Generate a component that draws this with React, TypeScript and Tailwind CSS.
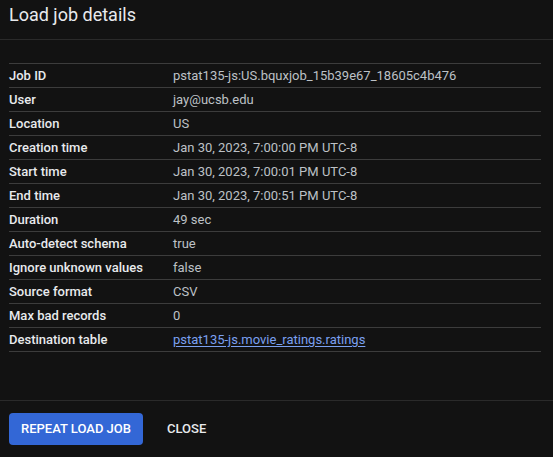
import React from 'react';

const rows: { label: string; value: string; link?: boolean }[] = [
  { label: 'Job ID', value: 'pstat135-js:US.bquxjob_15b39e67_18605c4b476' },
  { label: 'User', value: 'jay@ucsb.edu' },
  { label: 'Location', value: 'US' },
  { label: 'Creation time', value: 'Jan 30, 2023, 7:00:00 PM UTC-8' },
  { label: 'Start time', value: 'Jan 30, 2023, 7:00:01 PM UTC-8' },
  { label: 'End time', value: 'Jan 30, 2023, 7:00:51 PM UTC-8' },
  { label: 'Duration', value: '49 sec' },
  { label: 'Auto-detect schema', value: 'true' },
  { label: 'Ignore unknown values', value: 'false' },
  { label: 'Source format', value: 'CSV' },
  { label: 'Max bad records', value: '0' },
  { label: 'Destination table', value: 'pstat135-js.movie_ratings.ratings', link: true },
];

const App: React.FC = () => {
  return (
    <div className="h-[457px] w-[553px] bg-[#121212] flex flex-col font-['Roboto',sans-serif] overflow-hidden">
      <div className="h-[40px] border-b border-[#2a2a2a] px-[9px] flex items-start pt-[3px]">
        <h1 className="text-[18px] leading-[24px] text-[#e8eaed] font-normal">Load job details</h1>
      </div>

      <div className="flex-1 px-[9px] pt-[23px]">
        <div className="w-[532px] border-t border-[#3c3c3c]">
          {rows.map((row) => (
            <div key={row.label} className="grid grid-cols-[164px_1fr] h-[24px] border-b border-[#3c3c3c] items-center text-[13px]">
              <div className="text-[#e8eaed] font-medium">{row.label}</div>
              <div>
                {row.link ? (
                  <a href="#" className="text-[#7ba0f0] underline underline-offset-2">{row.value}</a>
                ) : (
                  <span className="text-[#bdc1c6]">{row.value}</span>
                )}
              </div>
            </div>
          ))}
        </div>
      </div>

      <div className="h-[57px] border-t border-[#2a2a2a] px-[9px] flex items-center gap-[12px]">
        <button className="h-[32px] px-[12px] rounded-[4px] bg-[#3367d6] text-white text-[13px] font-medium uppercase">
          Repeat load job
        </button>
        <button className="h-[32px] px-[12px] text-[#e8eaed] text-[13px] font-medium uppercase">
          Close
        </button>
      </div>
    </div>
  );
};

export default App;
